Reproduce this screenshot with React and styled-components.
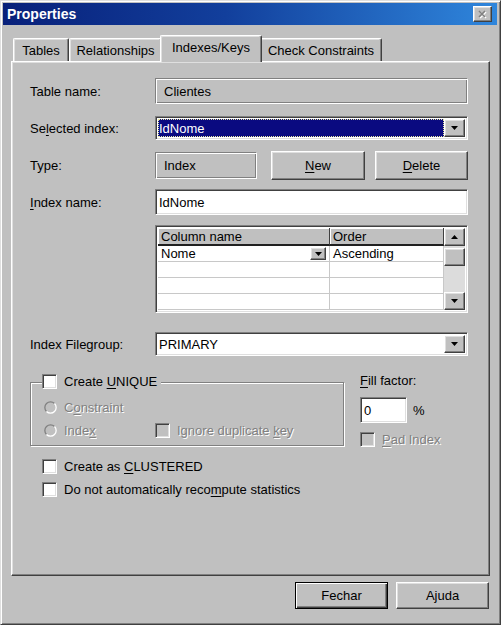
import React from 'react';
import styled, { createGlobalStyle, css } from 'styled-components';

const FACE = '#c0c0c0';

const Global = createGlobalStyle`
  html, body { margin: 0; padding: 0; background: ${FACE}; }
  body { font-family: "Liberation Sans", Arial, sans-serif; font-size: 13px; color: #000; }
  * { box-sizing: border-box; }
`;

const raised = css`
  border: 1px solid;
  border-color: #fff #404040 #404040 #fff;
  box-shadow: inset -1px -1px #808080, inset 1px 1px #dfdfdf;
`;

const sunken = css`
  border: 1px solid;
  border-color: #808080 #fff #fff #808080;
  box-shadow: inset 1px 1px #404040, inset -1px -1px #dfdfdf;
`;

const Window = styled.div`
  width: 501px;
  height: 625px;
  background: ${FACE};
  border: 1px solid;
  border-color: #dfdfdf #404040 #404040 #dfdfdf;
  box-shadow: inset 1px 1px #fff, inset -1px -1px #808080;
  padding: 2px 3px 3px 2px;
  display: flex;
  flex-direction: column;
`;

const TitleBar = styled.div`
  height: 22px;
  flex: none;
  display: flex;
  align-items: center;
  justify-content: space-between;
  padding: 0 5px 0 4px;
  background: linear-gradient(90deg, #08207a 0%, #123f9c 45%, #2f86dc 100%);
`;

const Title = styled.span`
  color: #fff;
  font-weight: bold;
  font-size: 14px;
`;

const CloseBtn = styled.div`
  width: 19px;
  height: 16px;
  background: ${FACE};
  ${raised};
  display: flex;
  align-items: center;
  justify-content: center;
`;

const Body = styled.div`
  flex: 1;
  display: flex;
  flex-direction: column;
  padding: 10px 7px 0 8px;
`;

const Tabs = styled.div`
  height: 26px;
  display: flex;
  align-items: flex-end;
  padding-left: 2px;
  position: relative;
  z-index: 2;
`;

const Tab = styled.div`
  width: ${(p) => p.$w}px;
  height: ${(p) => (p.$active ? 27 : 23)}px;
  margin: ${(p) => (p.$active ? '0 -2px -1px -2px' : '0')};
  background: ${FACE};
  border-top: 1px solid #fff;
  border-left: 1px solid #fff;
  border-right: 1px solid #404040;
  box-shadow: inset -1px 0 #808080, inset 1px 1px #dfdfdf;
  border-radius: 2px 2px 0 0;
  display: flex;
  align-items: ${(p) => (p.$active ? 'flex-start' : 'center')};
  padding-top: ${(p) => (p.$active ? 4 : 0)}px;
  justify-content: center;
  font-size: 13px;
  white-space: nowrap;
  position: relative;
  z-index: ${(p) => (p.$active ? 3 : 1)};
`;

const Panel = styled.div`
  height: 515px;
  flex: none;
  background: ${FACE};
  border: 1px solid;
  border-color: #fff #404040 #404040 #fff;
  box-shadow: inset -1px -1px #808080, inset 1px 1px #dfdfdf;
  padding: 0 21px 0 18px;
  display: flex;
  flex-direction: column;
`;

const FieldRow = styled.div`
  display: grid;
  grid-template-columns: 125px 1fr;
  align-items: center;
  height: ${(p) => p.$h}px;
  margin-top: ${(p) => p.$mt}px;
  flex: none;
`;

const Label = styled.span`
  white-space: nowrap;
`;

const U = styled.span`
  text-decoration: underline;
  text-underline-offset: 2px;
`;

const StaticBox = styled.div`
  height: ${(p) => p.$h || 26}px;
  width: ${(p) => (p.$w ? `${p.$w}px` : 'auto')};
  border: 1px solid;
  border-color: #808080 #fff #fff #808080;
  box-shadow: inset 1px 1px #fff, inset -1px -1px #808080;
  display: flex;
  align-items: center;
  padding-left: 8px;
`;

const TextInput = styled.div`
  height: ${(p) => p.$h || 26}px;
  width: ${(p) => (p.$w ? `${p.$w}px` : 'auto')};
  background: #fff;
  ${sunken};
  display: flex;
  align-items: center;
  padding-left: 3px;
`;

const Combo = styled.div`
  height: 24px;
  background: #fff;
  ${sunken};
  display: flex;
  align-items: stretch;
  padding: 2px;
`;

const ComboValue = styled.div`
  flex: 1;
  display: flex;
  align-items: center;
  padding-left: 1px;
  background: ${(p) => (p.$selected ? '#0a0a80' : 'transparent')};
  color: ${(p) => (p.$selected ? '#fff' : '#000')};
  outline: ${(p) => (p.$selected ? '1px dotted #e8e8a0' : 'none')};
  outline-offset: -1px;
`;

const ArrowBtn = styled.div`
  width: ${(p) => p.$w || 21}px;
  height: ${(p) => (p.$h ? `${p.$h}px` : 'auto')};
  background: ${FACE};
  ${raised};
  display: flex;
  align-items: center;
  justify-content: center;
  flex: none;
`;

const TypeControls = styled.div`
  display: flex;
  align-items: center;
`;

const Button = styled.div`
  width: ${(p) => p.$w || 93}px;
  height: ${(p) => p.$h || 29}px;
  margin-left: ${(p) => p.$ml || 0}px;
  background: ${FACE};
  ${raised};
  ${(p) =>
    p.$default &&
    css`
      border: 1px solid #000;
      box-shadow: inset 1px 1px #fff, inset -1px -1px #404040, inset -2px -2px #808080;
    `}
  display: flex;
  align-items: center;
  justify-content: center;
  flex: none;
`;

const GridBox = styled.div`
  height: 88px;
  ${sunken};
  display: flex;
  padding: 2px;
  background: #fff;
`;

const GridTable = styled.div`
  flex: 1;
  display: grid;
  grid-template-columns: 172px 1fr;
  grid-template-rows: 18px repeat(4, 1fr);
`;

const HeadCell = styled.div`
  background: ${FACE};
  border-right: 1px solid #404040;
  border-bottom: 2px solid #202020;
  box-shadow: inset 1px 1px #fff;
  display: flex;
  align-items: center;
  padding-left: 3px;
  white-space: nowrap;
`;

const Cell = styled.div`
  border-right: 1px solid #c8c8c8;
  border-bottom: 1px solid #c8c8c8;
  display: flex;
  align-items: center;
  justify-content: space-between;
  padding: 0 3px 0 3px;
`;

const ScrollBar = styled.div`
  width: 21px;
  display: flex;
  flex-direction: column;
  background: #dcdcdc;
`;

const Thumb = styled.div`
  height: 18px;
  margin-top: 2px;
  background: ${FACE};
  ${raised};
`;

const Track = styled.div`
  flex: 1;
`;

const Options = styled.div`
  display: flex;
  align-items: flex-start;
  margin-top: 17px;
  flex: none;
`;

const Group = styled.div`
  position: relative;
  width: 314px;
  height: 64px;
  margin-top: 9px;
  border: 1px solid #808080;
  box-shadow: inset 1px 1px #fff, 1px 1px #fff;
  padding: 16px 0 0 13px;
  display: flex;
  flex-direction: column;
  gap: 7px;
`;

const Legend = styled.div`
  position: absolute;
  top: -10px;
  left: 11px;
  background: ${FACE};
  padding-right: 4px;
  display: flex;
  align-items: center;
  gap: 7px;
  height: 16px;
`;

const OptionRow = styled.div`
  display: flex;
  align-items: center;
  height: 16px;
  margin-top: ${(p) => p.$mt || 0}px;
  margin-left: ${(p) => p.$ml || 0}px;
  flex: none;
`;

const OptionItem = styled.div`
  display: flex;
  align-items: center;
  gap: 7px;
  width: ${(p) => (p.$w ? `${p.$w}px` : 'auto')};
  color: ${(p) => (p.$disabled ? '#808080' : '#000')};
  text-shadow: ${(p) => (p.$disabled ? '1px 1px 0 #fff' : 'none')};
  white-space: nowrap;
`;

const Box = styled.div`
  width: 15px;
  height: 15px;
  flex: none;
  background: ${(p) => (p.$disabled ? FACE : '#fff')};
  ${sunken};
  text-shadow: none;
`;

const FillCol = styled.div`
  margin-left: 16px;
  display: flex;
  flex-direction: column;
`;

const FillLine = styled.div`
  display: flex;
  align-items: center;
  gap: 6px;
  margin-top: 9px;
`;

const Footer = styled.div`
  display: flex;
  justify-content: flex-end;
  gap: 8px;
  margin-top: 6px;
  padding-right: 1px;
`;

const Arrow = ({ up }) => (
  <svg width="7" height="4" viewBox="0 0 7 4">
    <path d={up ? 'M3.5 0L7 4H0z' : 'M0 0h7L3.5 4z'} fill="#000" />
  </svg>
);

const Radio = () => (
  <svg width="13" height="13" viewBox="0 0 13 13" style={{ flex: 'none' }}>
    <path d="M10.5 2.5A5.5 5.5 0 0 0 2.5 10.5" stroke="#808080" strokeWidth="1.3" fill="none" />
    <path d="M2.5 10.5A5.5 5.5 0 0 0 10.5 2.5" stroke="#fff" strokeWidth="1.3" fill="none" />
    <circle cx="6.5" cy="6.5" r="4.3" fill={FACE} />
  </svg>
);

const CloseIcon = () => (
  <svg width="10" height="9" viewBox="0 0 10 9">
    <path d="M2 2l6 6M8 2l-6 6" stroke="#fff" strokeWidth="1.6" />
    <path d="M1 1l6 6M7 1l-6 6" stroke="#808080" strokeWidth="1.6" />
  </svg>
);

export default function App() {
  return (
    <>
      <Global />
      <Window>
        <TitleBar>
          <Title>Properties</Title>
          <CloseBtn>
            <CloseIcon />
          </CloseBtn>
        </TitleBar>
        <Body>
          <Tabs>
            <Tab $w={56}>Tables</Tab>
            <Tab $w={93}>Relationships</Tab>
            <Tab $w={102} $active>
              Indexes/Keys
            </Tab>
            <Tab $w={122}>Check Constraints</Tab>
          </Tabs>
          <Panel>
            <FieldRow $mt={16} $h={26}>
              <Label>Table name:</Label>
              <StaticBox>Clientes</StaticBox>
            </FieldRow>
            <FieldRow $mt={12} $h={24}>
              <Label>
                Se<U>l</U>ected index:
              </Label>
              <Combo>
                <ComboValue $selected>IdNome</ComboValue>
                <ArrowBtn>
                  <Arrow />
                </ArrowBtn>
              </Combo>
            </FieldRow>
            <FieldRow $mt={11} $h={29}>
              <Label>Type:</Label>
              <TypeControls>
                <StaticBox $w={102} $h={27}>
                  Index
                </StaticBox>
                <Button $w={94} $ml={14}>
                  <span>
                    <U>N</U>ew
                  </span>
                </Button>
                <Button $w={93} $ml={10}>
                  <span>
                    <U>D</U>elete
                  </span>
                </Button>
              </TypeControls>
            </FieldRow>
            <FieldRow $mt={9} $h={26}>
              <Label>
                <U>I</U>ndex name:
              </Label>
              <TextInput>IdNome</TextInput>
            </FieldRow>
            <FieldRow $mt={10} $h={88}>
              <span />
              <GridBox>
                <GridTable>
                  <HeadCell>Column name</HeadCell>
                  <HeadCell>Order</HeadCell>
                  <Cell>
                    <span>Nome</span>
                    <ArrowBtn $w={16} $h={13}>
                      <Arrow />
                    </ArrowBtn>
                  </Cell>
                  <Cell>Ascending</Cell>
                  <Cell />
                  <Cell />
                  <Cell />
                  <Cell />
                  <Cell />
                  <Cell />
                </GridTable>
                <ScrollBar>
                  <ArrowBtn $w={21} $h={18}>
                    <Arrow up />
                  </ArrowBtn>
                  <Thumb />
                  <Track />
                  <ArrowBtn $w={21} $h={18}>
                    <Arrow />
                  </ArrowBtn>
                </ScrollBar>
              </GridBox>
            </FieldRow>
            <FieldRow $mt={19} $h={24}>
              <Label>Index Filegroup:</Label>
              <Combo>
                <ComboValue>PRIMARY</ComboValue>
                <ArrowBtn>
                  <Arrow />
                </ArrowBtn>
              </Combo>
            </FieldRow>
            <Options>
              <Group>
                <Legend>
                  <Box />
                  <span>
                    Create <U>U</U>NIQUE
                  </span>
                </Legend>
                <OptionRow>
                  <OptionItem $disabled>
                    <Radio />
                    <span>
                      C<U>o</U>nstraint
                    </span>
                  </OptionItem>
                </OptionRow>
                <OptionRow>
                  <OptionItem $disabled $w={111}>
                    <Radio />
                    <span>
                      Inde<U>x</U>
                    </span>
                  </OptionItem>
                  <OptionItem $disabled>
                    <Box $disabled />
                    <span>
                      Ignore duplicate <U>k</U>ey
                    </span>
                  </OptionItem>
                </OptionRow>
              </Group>
              <FillCol>
                <Label>
                  <U>F</U>ill factor:
                </Label>
                <FillLine>
                  <TextInput $w={47} $h={26}>
                    0
                  </TextInput>
                  <span>%</span>
                </FillLine>
                <OptionRow $mt={8}>
                  <OptionItem $disabled>
                    <Box $disabled />
                    <span>
                      <U>P</U>ad Index
                    </span>
                  </OptionItem>
                </OptionRow>
              </FillCol>
            </Options>
            <OptionRow $mt={11} $ml={12}>
              <OptionItem>
                <Box />
                <span>
                  Create as <U>C</U>LUSTERED
                </span>
              </OptionItem>
            </OptionRow>
            <OptionRow $mt={7} $ml={12}>
              <OptionItem>
                <Box />
                <span>
                  Do not automatically reco<U>m</U>pute statistics
                </span>
              </OptionItem>
            </OptionRow>
          </Panel>
          <Footer>
            <Button $default $h={27}>
              Fechar
            </Button>
            <Button $h={27}>Ajuda</Button>
          </Footer>
        </Body>
      </Window>
    </>
  );
}
